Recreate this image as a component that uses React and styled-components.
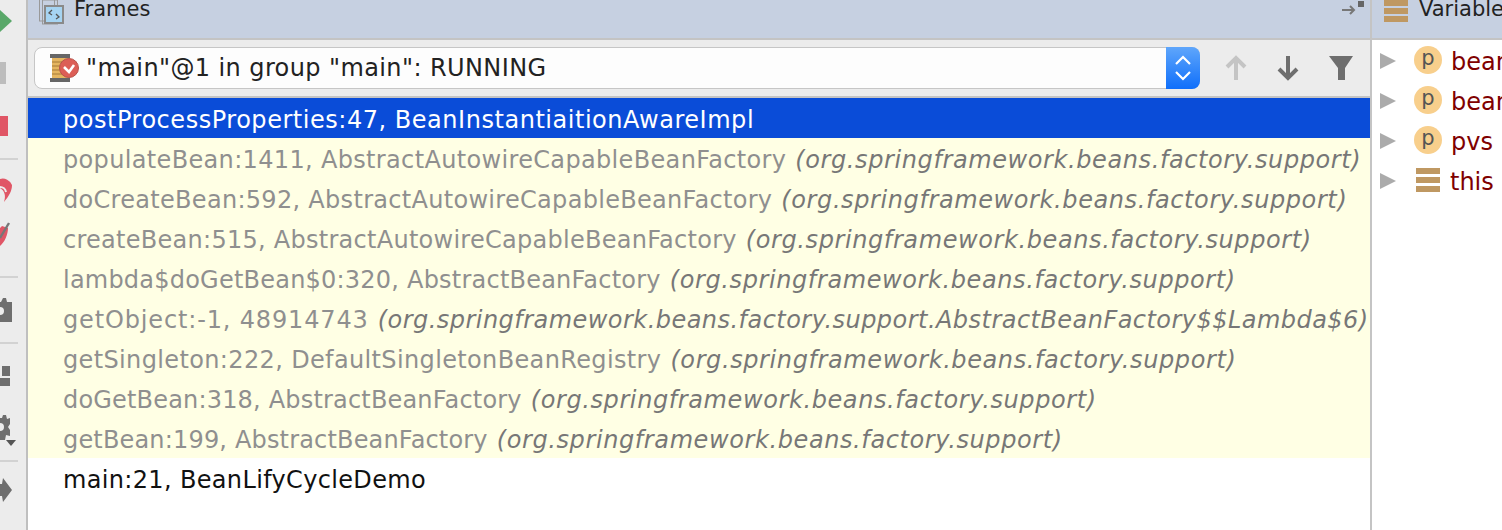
import React from "react";
import styled, { createGlobalStyle } from "styled-components";

const GlobalStyle = createGlobalStyle`
  html, body {
    margin: 0;
    padding: 0;
    background: #fff;
  }
  body {
    font-family: "DejaVu Sans", "Liberation Sans", sans-serif;
  }
`;

const Page = styled.div`
  display: flex;
  width: 1502px;
  height: 530px;
  overflow: hidden;
  background: #fff;
`;

const SideBar = styled.div`
  width: 26px;
  flex: none;
  background: #ececec;
  border-right: 2px solid #bfbfbf;
  overflow: hidden;
`;

const SideIcon = styled.svg`
  display: block;
  width: 26px;
`;

const Main = styled.div`
  flex: 1;
  display: flex;
  flex-direction: column;
  border-right: 2px solid #c4c4c4;
  min-width: 0;
`;

const Header = styled.div`
  height: 38px;
  flex: none;
  display: flex;
  align-items: center;
  background: #c6d0e1;
  border-bottom: 2px solid #c4c4c4;
  color: #222;
  font-size: 21px;
  overflow: hidden;
`;

const FramesHeader = styled(Header)`
  padding: 0 6px 0 11px;
  gap: 9px;
`;

const HeaderLabel = styled.span`
  flex: 1;
  margin-top: -20px;
  line-height: 26px;
`;

const HeaderIcon = styled.svg`
  flex: none;
  overflow: visible;
  margin-top: ${(p) => p.$lift}px;
`;

const ThreadBar = styled.div`
  height: 58px;
  flex: none;
  display: flex;
  align-items: center;
  box-sizing: border-box;
  padding: 0 16px 0 6px;
  background: #ececec;
  border-bottom: 2px solid #c4c4c4;
`;

const ThreadSelect = styled.div`
  width: 1166px;
  height: 42px;
  flex: none;
  display: flex;
  align-items: center;
  box-sizing: border-box;
  border: 1px solid #c6c6c6;
  border-radius: 8px;
  background: #fdfdfd;
  position: relative;
  padding-left: 14px;
  gap: 5px;
  font-size: 24px;
  letter-spacing: 0.4px;
  color: #222;
`;

const SelectStepper = styled.div`
  position: absolute;
  right: -1px;
  top: -1px;
  width: 34px;
  height: 42px;
  border-radius: 0 8px 8px 0;
  background: linear-gradient(#5fa6fb, #0f6ffb);
  display: flex;
  align-items: center;
  justify-content: center;
`;

const ToolButtons = styled.div`
  flex: 1;
  display: flex;
  justify-content: space-between;
  align-items: center;
  padding-left: 25px;
`;

const FrameList = styled.div`
  flex: 1;
  display: flex;
  flex-direction: column;
  overflow: hidden;
`;

const FrameRow = styled.div`
  height: 40px;
  flex: none;
  box-sizing: border-box;
  padding: 2px 0 0 35px;
  line-height: 40px;
  font-size: 24px;
  white-space: nowrap;
  background: ${(p) => (p.$selected ? "#0a4cd8" : p.$library ? "#ffffe4" : "#fff")};
  color: ${(p) => (p.$selected ? "#fff" : p.$library ? "#8f8f8f" : "#111")};
`;

const FrameName = styled.span`
  letter-spacing: ${(p) => p.$track}px;
`;

const FramePackage = styled.span`
  font-style: italic;
  color: #777;
  margin-left: 9px;
  letter-spacing: ${(p) => p.$track}px;
`;

const VariablesPane = styled.div`
  width: 130px;
  flex: none;
  display: flex;
  flex-direction: column;
  overflow: hidden;
`;

const VariablesHeader = styled(Header)`
  padding-left: 12px;
  gap: 11px;
  white-space: nowrap;
`;

const VariableList = styled.div`
  display: flex;
  flex-direction: column;
`;

const VariableRow = styled.div`
  height: 40px;
  display: flex;
  align-items: center;
  padding-left: 8px;
  font-size: 24px;
  color: #7f0000;
  white-space: nowrap;
`;

const VariableName = styled.span`
  margin-top: 3px;
`;

const Arrow = styled.span`
  width: 0;
  height: 0;
  flex: none;
  border-style: solid;
  border-width: 8px 0 8px 16px;
  border-color: transparent transparent transparent #ababab;
  margin: 2px 18px 0 0;
`;

const ParamBadge = styled.span`
  width: 28px;
  height: 28px;
  flex: none;
  border-radius: 50%;
  background: #f8cf8c;
  color: #555;
  font-size: 21px;
  line-height: 24px;
  text-align: center;
  margin-right: 9px;
`;

const ThisIcon = styled.svg`
  flex: none;
  margin: 0 10px 0 2px;
`;

const frames = [
  { name: "populateBean:1411, AbstractAutowireCapableBeanFactory", track: 0.34 },
  { name: "doCreateBean:592, AbstractAutowireCapableBeanFactory", track: 0.3 },
  { name: "createBean:515, AbstractAutowireCapableBeanFactory", track: 0.27 },
  { name: "lambda$doGetBean$0:320, AbstractBeanFactory", track: 0.22 },
  {
    name: "getObject:-1, 48914743",
    track: 0.85,
    pkg: "(org.springframework.beans.factory.support.AbstractBeanFactory$$Lambda$6)",
    pkgTrack: 0.46,
  },
  { name: "getSingleton:222, DefaultSingletonBeanRegistry", track: 0.36 },
  { name: "doGetBean:318, AbstractBeanFactory", track: 0.18 },
  { name: "getBean:199, AbstractBeanFactory", track: 0.17 },
];

const DEFAULT_PKG = "(org.springframework.beans.factory.support)";

const App = () => (
  <Page>
    <GlobalStyle />
    <SideBar>
      <SideIcon height="530" viewBox="0 0 26 530">
        <path d="M0 10 L12 21 L0 32 Z" fill="#59a869" />
        <rect x="0" y="62" width="6" height="22" fill="#bdbdbd" />
        <rect x="0" y="116" width="8" height="20" fill="#e05666" />
        <rect x="0" y="158" width="18" height="2" fill="#d2d2d2" />
        <path d="M0 179 a10 10 0 0 1 12 6 c0 6 -3 11 -8 17 c2 -6 1 -11 -4 -14 Z" fill="#e05666" />
        <path d="M0 187 a6 6 0 0 1 6 5" fill="none" stroke="#ececec" strokeWidth="2" />
        <path d="M0 228 a8 8 0 0 0 2 -2 l6 2 c0 6 -3 14 -8 18 Z" fill="#e05666" />
        <path d="M0 238 L9 223" stroke="#777" strokeWidth="2.4" />
        <rect x="0" y="276" width="18" height="2" fill="#d2d2d2" />
        <path d="M0 302 h1 l2 -4 h3 l1 4 h5 v20 h-12 Z" fill="#6e6e6e" />
        <circle cx="0" cy="311" r="4" fill="#ececec" />
        <rect x="0" y="342" width="18" height="2" fill="#d2d2d2" />
        <rect x="2" y="366" width="8" height="10" fill="#6e6e6e" />
        <rect x="0" y="378" width="10" height="8" fill="#6e6e6e" />
        <path d="M0 418 h2 l1 -3 h3 l1 4 l3 -1 v6 l-2 3 l2 3 v6 l-4 -1 l-1 5 h-5 Z" fill="#6e6e6e" />
        <circle cx="0" cy="427" r="4" fill="#ececec" />
        <path d="M6 440 h10 l-5 6 Z" fill="#555" />
        <rect x="0" y="460" width="18" height="2" fill="#d2d2d2" />
        <path d="M3 478 l9 12 l-9 12 l-1 -6 h-2 v-12 h2 Z" fill="#6e6e6e" />
      </SideIcon>
    </SideBar>
    <Main>
      <FramesHeader>
        <HeaderIcon width="26" height="24" viewBox="0 0 26 24" $lift={-4}>
          <rect x="0.5" y="-8" width="15" height="24" fill="none" stroke="#999" />
          <rect x="3.5" y="-5" width="15" height="24" fill="none" stroke="#999" />
          <rect x="6" y="1" width="18" height="17" fill="#a6d4f2" stroke="#8a8a8a" strokeWidth="2" />
          <path d="M13 5 l-3 3 l3 2 M17 9 l3 3 l-3 2" fill="none" stroke="#555" strokeWidth="1.3" />
        </HeaderIcon>
        <HeaderLabel>Frames</HeaderLabel>
        <HeaderIcon width="24" height="16" viewBox="0 0 24 16" $lift={-22}>
          <path d="M2 10 H13 M10 6 L14 10 L10 14" fill="none" stroke="#777" strokeWidth="2" />
          <rect x="18" y="1" width="6" height="6" fill="#666" />
        </HeaderIcon>
      </FramesHeader>
      <ThreadBar>
        <ThreadSelect>
          <svg width="32" height="30" viewBox="0 0 32 30" style={{ flex: "none" }}>
            <rect x="1" y="1" width="20" height="4" fill="#666" />
            <rect x="1" y="25" width="20" height="4" fill="#666" />
            <rect x="3" y="5" width="16" height="20" fill="#e5b560" />
            <path d="M3 9 H19 M3 13 H19 M3 17 H19 M3 21 H19" stroke="#a57b36" />
            <circle cx="20" cy="15" r="9.5" fill="#dc5e56" stroke="#b8534b" />
            <path d="M15 14 L20 19 L25 12" fill="none" stroke="#fff" strokeWidth="2.6" />
          </svg>
          <span>"main"@1 in group "main": RUNNING</span>
          <SelectStepper>
            <svg width="18" height="30" viewBox="0 0 18 30">
              <path d="M2 11 L9 4 L16 11 M2 19 L9 26 L16 19" fill="none" stroke="#fff" strokeWidth="2.2" />
            </svg>
          </SelectStepper>
        </ThreadSelect>
        <ToolButtons>
          <svg width="22" height="26" viewBox="0 0 22 26">
            <path d="M11 25 V3 M2 12 L11 3 L20 12" fill="none" stroke="#c4c4c4" strokeWidth="4" />
          </svg>
          <svg width="22" height="26" viewBox="0 0 22 26">
            <path d="M11 1 V23 M2 14 L11 23 L20 14" fill="none" stroke="#6e6e6e" strokeWidth="4" />
          </svg>
          <svg width="26" height="26" viewBox="0 0 26 26">
            <path d="M1 1 H25 L17 13 V25 H10 V13 Z" fill="#6e6e6e" />
          </svg>
        </ToolButtons>
      </ThreadBar>
      <FrameList>
        <FrameRow $selected>
          <FrameName $track={0.53}>postProcessProperties:47, BeanInstantiaitionAwareImpl</FrameName>
        </FrameRow>
        {frames.map((f) => (
          <FrameRow $library key={f.name}>
            <FrameName $track={f.track}>{f.name}</FrameName>
            <FramePackage $track={f.pkgTrack || 0.6}>{f.pkg || DEFAULT_PKG}</FramePackage>
          </FrameRow>
        ))}
        <FrameRow>
          <FrameName $track={0.34}>main:21, BeanLifyCycleDemo</FrameName>
        </FrameRow>
      </FrameList>
    </Main>
    <VariablesPane>
      <VariablesHeader>
        <HeaderIcon width="24" height="22" viewBox="0 0 24 22" $lift={-16}>
          <rect x="0" y="0" width="24" height="6" fill="#bf9862" />
          <rect x="0" y="8" width="24" height="6" fill="#bf9862" />
          <rect x="0" y="16" width="24" height="6" fill="#bf9862" />
        </HeaderIcon>
        <HeaderLabel>Variables</HeaderLabel>
      </VariablesHeader>
      <VariableList>
        {["beanName", "bean", "pvs"].map((v) => (
          <VariableRow key={v}>
            <Arrow />
            <ParamBadge>p</ParamBadge>
            <VariableName>{v}</VariableName>
          </VariableRow>
        ))}
        <VariableRow>
          <Arrow />
          <ThisIcon width="24" height="24" viewBox="0 0 24 24">
            <rect x="0" y="0" width="24" height="6" fill="#bf9862" />
            <rect x="0" y="9" width="24" height="6" fill="#bf9862" />
            <rect x="0" y="18" width="24" height="6" fill="#bf9862" />
          </ThisIcon>
          <VariableName>this</VariableName>
        </VariableRow>
      </VariableList>
    </VariablesPane>
  </Page>
);

export default App;
